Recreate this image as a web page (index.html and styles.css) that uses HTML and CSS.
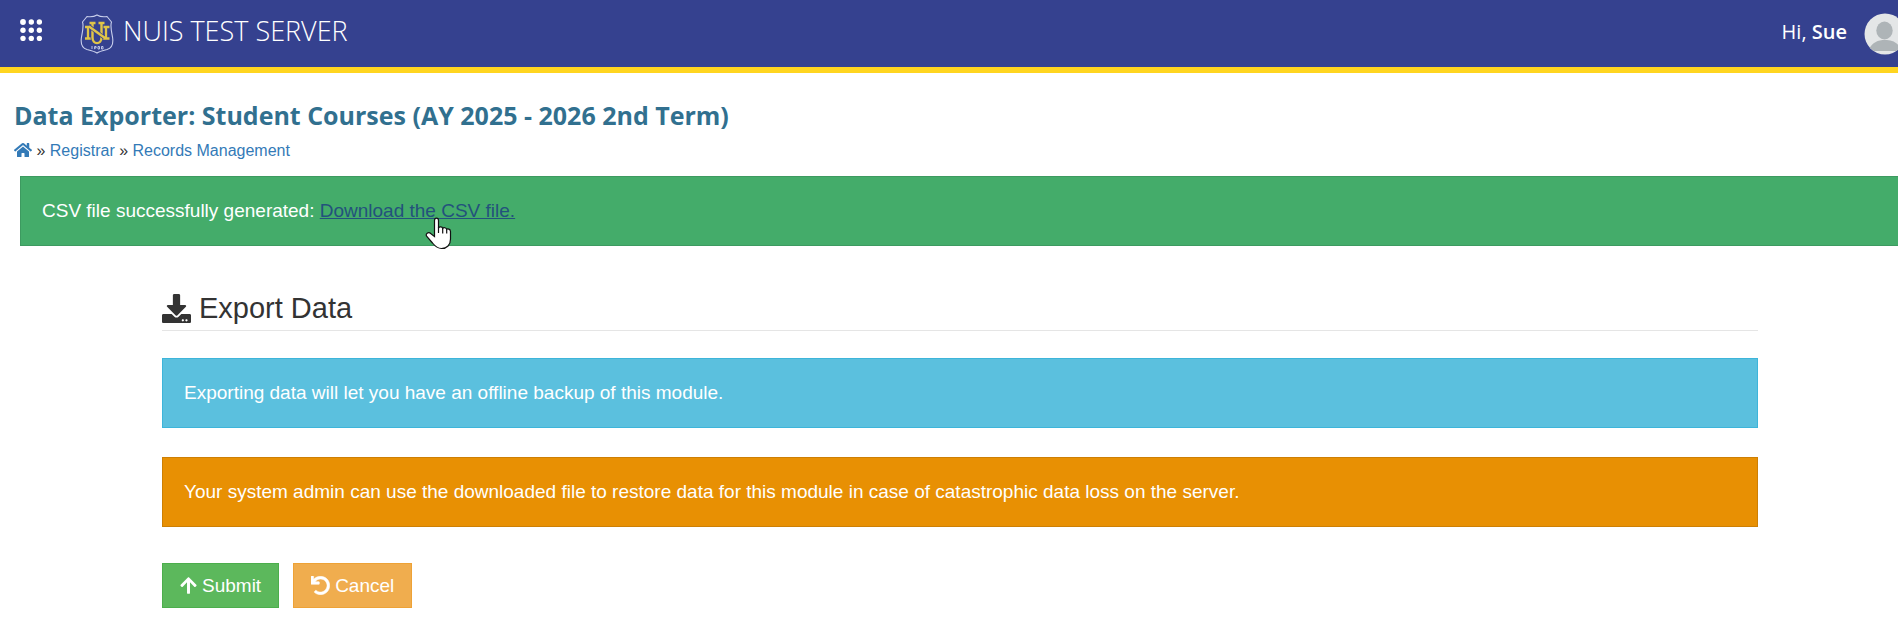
FILE: index.html
```html
<!DOCTYPE html>
<html lang="en">
<head>
<meta charset="utf-8">
<title>Data Exporter: Student Courses</title>
<link rel="stylesheet" href="styles.css">
</head>
<body>
<div class="page">
  <header class="topbar">
    <button class="apps" type="button" aria-label="Applications">
      <svg viewBox="0 0 22 22" width="22" height="22" fill="currentColor"><circle cx="3" cy="3" r="2.9"/><circle cx="11.3" cy="3" r="2.7"/><circle cx="19.4" cy="3" r="2.7"/><circle cx="3" cy="11.3" r="2.7"/><circle cx="11.3" cy="11.3" r="2.7"/><circle cx="19.4" cy="11.3" r="2.7"/><circle cx="3" cy="19.4" r="2.7"/><circle cx="11.3" cy="19.4" r="2.7"/><circle cx="19.4" cy="19.4" r="2.7"/></svg>
    </button>
    <a class="brand" href="#">
      <svg class="crest" viewBox="0 0 34 40" width="34" height="40" fill="none">
        <path d="M17 1C14.500 2.500 10 3 7 2.500L2.500 8C4 12 2.500 18 1.500 23C.5 29 2 34 7 35.500C11 36.500 15 37.500 17 39C19 37.500 23 36.500 27 35.500C32 34 33.500 29 32.500 23C31.500 18 30 12 31.500 8L27 2.500C24 3 19.500 2.500 17 1Z" stroke="#c9cfec" stroke-width="1.100"/>
        <path d="M5 13H10L24.500 24H26V13M5 24.500H11M8 13V24.500M23 13H29.500M23 24.500H29.500" stroke="#e0c548" stroke-width="2.300"/>
        <path d="M12.500 9V23.500C12.500 31.500 21.500 31.500 21.500 23.500V9" stroke="#35418f" stroke-width="4"/>
        <path d="M9.500 9H15.500M18.500 9H24.500M12.500 9V23.500C12.500 31 21.500 31 21.500 23.500V9" stroke="#e0c548" stroke-width="2.400"/>
        <path d="M10 13L24 23.500" stroke="#35418f" stroke-width="4"/>
        <path d="M9 12.500L25 24" stroke="#e0c548" stroke-width="2.400"/>
        <path d="M12 32V35M14.600 35.200V32.500H16.100V34H14.600M18 32.500H19.500V35H18ZM21.500 32.500H23V35H21.500Z" stroke="#c9cfec" stroke-width=".9"/>
      </svg>
      <span>NUIS TEST SERVER</span>
    </a>
    <div class="account">
      <span class="greeting">Hi, <b>Sue</b></span>
      <svg viewBox="0 0 42 42" width="42" height="42"><defs><clipPath id="disc"><circle cx="21" cy="21" r="20.500"/></clipPath></defs><g clip-path="url(#disc)"><path fill="#e4e6e7" d="M0 0H42V42H0Z"/><ellipse cx="20.500" cy="17.500" rx="8.200" ry="9" fill="#aeb4b7"/><path fill="#aeb4b7" d="M4 38C8 29 14 27 21 27S34 29 38 38Z"/></g></svg>
    </div>
  </header>

  <div class="heading">
    <h1>Data Exporter: Student Courses (AY 2025 - 2026 2nd Term)</h1>
    <nav class="crumbs" aria-label="Breadcrumb">
      <a href="#" aria-label="Home"><svg class="home" viewBox="0 0 576 512" width="18" height="16" fill="currentColor"><path d="M280.37 148.26L96 300.11V464a16 16 0 0 0 16 16l112.06-.29a16 16 0 0 0 15.92-16V368a16 16 0 0 1 16-16h64a16 16 0 0 1 16 16v95.64a16 16 0 0 0 16 16.05L464 480a16 16 0 0 0 16-16V300L295.67 148.26a12.19 12.19 0 0 0-15.3 0zM571.6 251.47L488 182.56V44.05a12 12 0 0 0-12-12h-56a12 12 0 0 0-12 12v72.61L318.47 43a48 48 0 0 0-61 0L4.34 251.47a12 12 0 0 0-1.6 16.9l25.5 31A12 12 0 0 0 45.15 301l235.22-193.74a12.19 12.19 0 0 1 15.3 0L530.9 301a12 12 0 0 0 16.9-1.6l25.500-31a12 12 0 0 0-1.700-16.930z"/></svg></a>
      »
      <a href="#">Registrar</a>
      »
      <a href="#">Records Management</a>
    </nav>
  </div>

  <div class="alert alert-success" role="status">
    CSV file successfully generated: <span class="download"><a href="#">Download the CSV file.</a>
    <svg class="pointer" viewBox="0 0 27 33" width="27" height="33"><path d="M9.500 3.500C9.500 .2 13.500 .2 13.500 3.500V11C14 9.500 17.500 9.500 17.700 11.500C18.500 10.200 21.500 10.500 21.700 12.500C22.500 11.500 25.500 12 25.500 14.500V22C25.500 28 22 31.500 16.500 31.500C12 31.500 9.500 28.500 7.500 26L1.800 19.500C-.2 16.500 3.500 14.500 6 16.800L9.500 19.500Z" fill="#fff" stroke="#111" stroke-width="1.200"/><path d="M13.500 10.500V16M17.700 11.500V16.500M21.700 12.500V16.500" stroke="#111" stroke-width="1.200"/></svg></span>
  </div>

  <main class="content">
    <h2><svg viewBox="0 0 512 512" width="29" height="29" fill="currentColor"><path d="M216 0h80c13.300 0 24 10.700 24 24v168h87.700c17.800 0 26.700 21.500 14.100 34.100L269.700 378.300c-7.500 7.500-19.800 7.500-27.300 0L90.100 226.100c-12.600-12.600-3.700-34.100 14.100-34.100H192V24c0-13.300 10.700-24 24-24zm296 376v112c0 13.300-10.700 24-24 24H24c-13.300 0-24-10.700-24-24V376c0-13.300 10.700-24 24-24h146.700l49 49c20.100 20.100 52.500 20.100 72.600 0l49-49H488c13.300 0 24 10.700 24 24zm-124 88c0-11-9-20-20-20s-20 9-20 20 9 20 20 20 20-9 20-20zm64 0c0-11-9-20-20-20s-20 9-20 20 9 20 20 20 20-9 20-20z"/></svg>Export Data</h2>
    <div class="alert alert-info">Exporting data will let you have an offline backup of this module.</div>
    <div class="alert alert-warning">Your system admin can use the downloaded file to restore data for this module in case of catastrophic data loss on the server.</div>
    <form class="actions">
      <button class="btn btn-submit" type="submit"><svg viewBox="0 0 448 512" width="17" height="19" fill="currentColor"><path d="M34.900 289.500l-22.200-22.200c-9.400-9.400-9.400-24.600 0-33.900L207 39c9.400-9.400 24.600-9.400 33.900 0l194.300 194.300c9.400 9.400 9.400 24.600 0 33.900L413 289.400c-9.500 9.500-25 9.300-34.300-.4L264 168.600V456c0 13.300-10.700 24-24 24h-32c-13.300 0-24-10.700-24-24V168.600L69.200 289.100c-9.300 9.800-24.800 10-34.300.4z"/></svg>Submit</button>
      <button class="btn btn-cancel" type="button"><svg viewBox="0 0 512 512" width="19" height="19" fill="currentColor"><path d="M212.333 224.333H12c-6.627 0-12-5.373-12-12V12C0 5.373 5.373 0 12 0h48c6.627 0 12 5.373 12 12v78.112C117.773 39.279 184.260 7.470 258.175 8.007c136.906.994 246.448 111.623 246.157 248.532C504.041 393.258 393.120 504 256.333 504c-64.089 0-122.496-24.313-166.510-64.215-5.099-4.622-5.334-12.554-.467-17.420l33.967-33.967c4.474-4.474 11.662-4.717 16.401-.525C170.760 415.336 211.580 432 256.333 432c97.268 0 176-78.716 176-176 0-97.267-78.716-176-176-176-58.496 0-110.280 28.476-142.274 72.333h98.274c6.627 0 12 5.373 12 12v48c0 6.627-5.373 12-12 12z" stroke="currentColor" stroke-width="14"/></svg>Cancel</button>
    </form>
  </main>
</div>
</body>
</html>
```
FILE: styles.css
```css
* { box-sizing: border-box; }
html { overflow: hidden; }
body {
  margin: 0;
  background: #fff;
  color: #333;
  font: 19px/25px "Liberation Sans", Arial, sans-serif;
}
/* The page runs slightly past the right edge of the window. */
.page { width: calc(100% + 22px); }
svg { flex: none; }

.topbar {
  display: flex;
  align-items: center;
  padding: 6px 14px 6px 20px;
  border-bottom: 6px solid #ffd520;
  background: #35418f;
  color: #fff;
  font-family: "Open Sans", "Noto Sans", sans-serif;
  height: 73px;
}
.apps {
  display: flex;
  padding: 0;
  border: 0;
  margin-bottom: 7px;
  background: none;
  color: inherit;
}
.brand {
  display: flex;
  align-items: center;
  gap: 9px;
  margin-left: 38px;
  color: inherit;
  font-size: 27px;
  font-weight: 300;
  line-height: 40px;
  text-decoration: none;
}
.brand span { padding-bottom: 6px; }
.account {
  display: flex;
  align-items: center;
  gap: 17px;
  margin-left: auto;
  font-size: 20px;
}
.greeting { padding-bottom: 4px; }
.account b { font-weight: 600; }

.heading { padding: 24px 14px 0; }
h1 {
  margin: 0;
  color: #31708f;
  font: bold 25px/36px "Open Sans", "Noto Sans", sans-serif;
}
.crumbs {
  padding: 6px 0 13px;
  font-size: 16px;
  line-height: 24px;
}
.crumbs a, .btn { text-decoration: none; }
.crumbs a { color: #337ab7; }
.home { vertical-align: -2px; }

.alert {
  padding: 22px 21px;
  border: 1px solid;
  color: #fff;
  line-height: 24px;
}
.alert-success {
  margin: 0 20px;
  border-color: #3d9a60;
  background: #44ac6a;
}
.alert-info { border-color: #3db5da; background: #5bc0de; }
.alert-warning { margin-top: 29px; border-color: #cd7f04; background: #e89003; }
.download { position: relative; }
.download a { color: #23527c; }
.pointer { position: absolute; left: 105px; top: 17px; }

.content { padding: 41px 162px 24px; }
h2 {
  display: flex;
  align-items: center;
  gap: 8px;
  margin: 0 0 27px;
  padding-bottom: 1px;
  border-bottom: 1px solid #e5e5e5;
  font-size: 29px;
  font-weight: 400;
  line-height: 42px;
}
.actions {
  display: flex;
  gap: 14px;
  margin-top: 36px;
}
.btn {
  display: flex;
  align-items: center;
  gap: 5px;
  padding: 9px 17px;
  border: 1px solid;
  color: #fff;
  font: inherit;
}
.btn-submit { border-color: #4cae4c; background: #5cb85c; }
.btn-cancel { border-color: #eea236; background: #f0ad4e; }
```
